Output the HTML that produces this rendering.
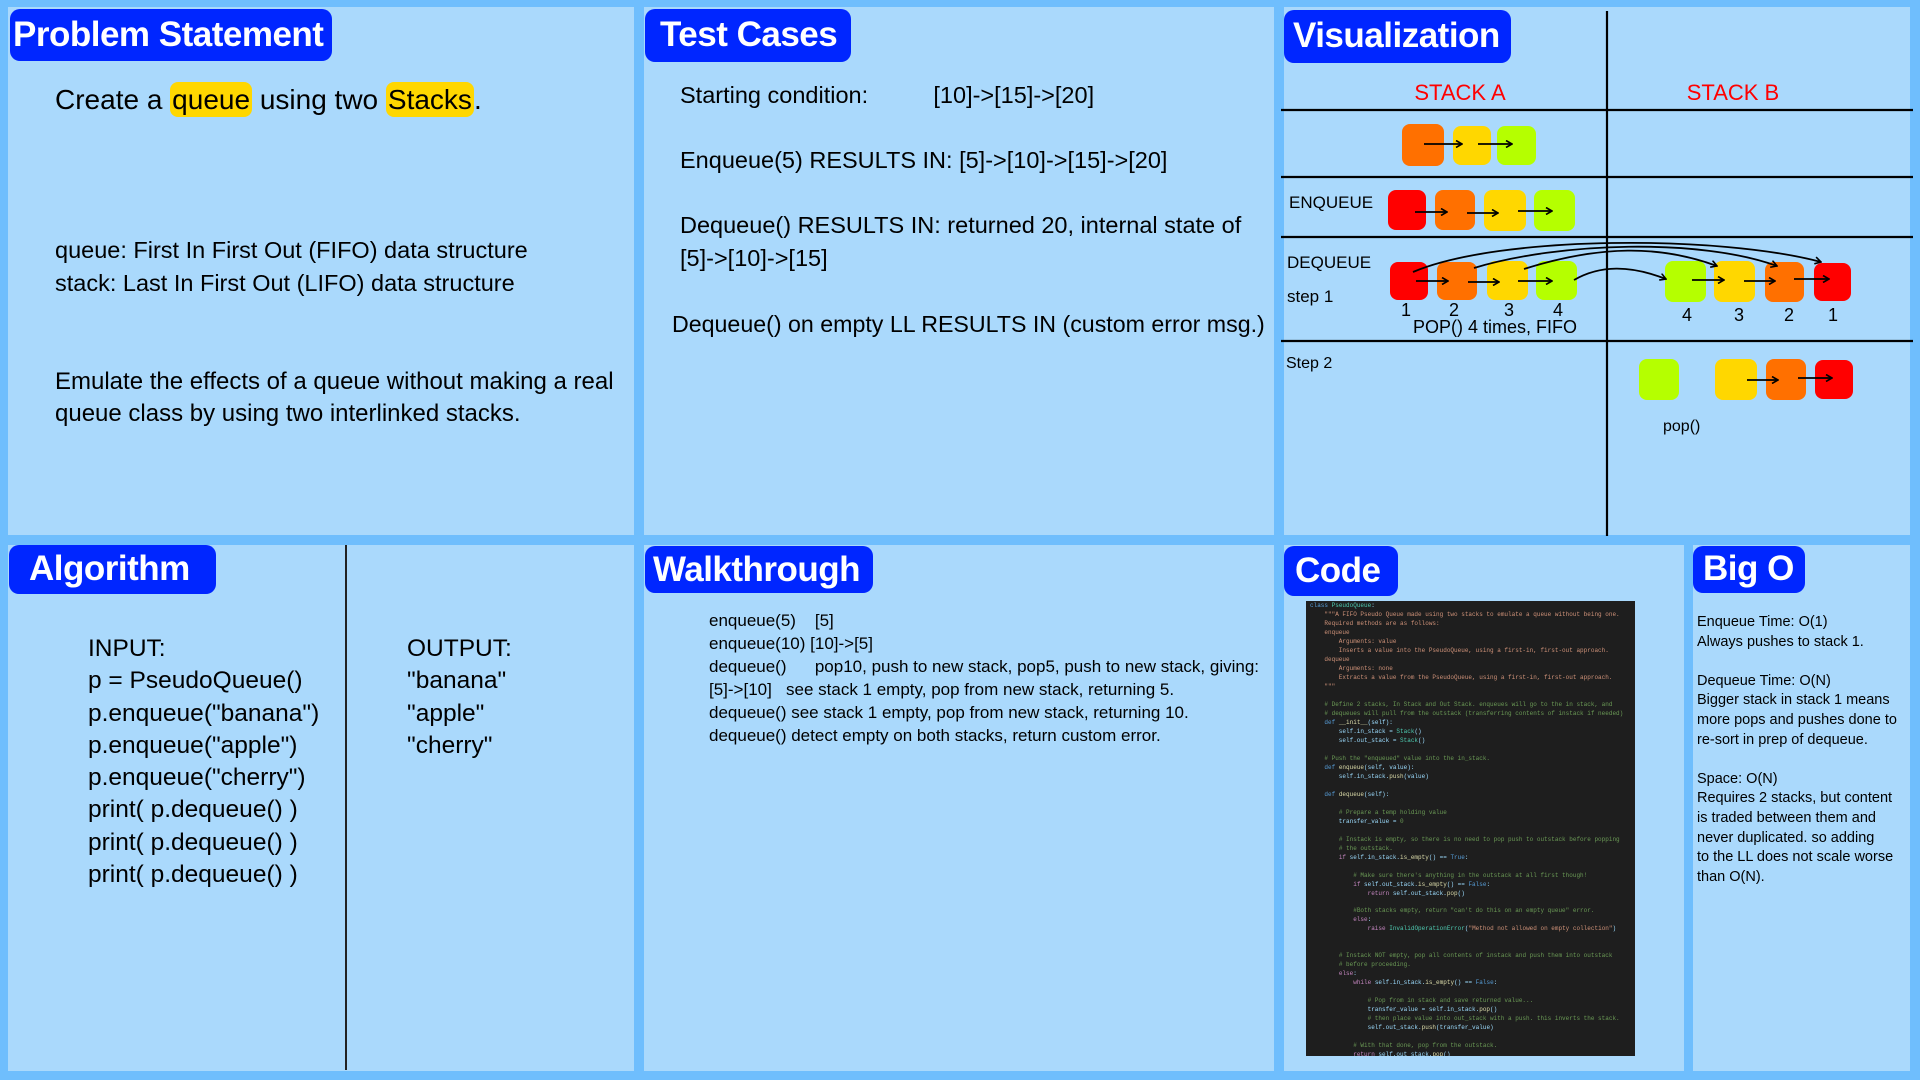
<!DOCTYPE html>
<html><head><meta charset="utf-8">
<style>
*{margin:0;padding:0;box-sizing:border-box}
html,body{width:1920px;height:1080px;overflow:hidden;background:#6fbefd;font-family:"Liberation Sans",sans-serif;color:#000}
.p{position:absolute;background:#aad9fc}
.b{position:absolute;background:#0026ff;color:#fff;font-weight:bold;border-radius:10px;font-size:35px;line-height:1;padding-top:8px;letter-spacing:-0.5px}
.t{position:absolute;white-space:nowrap;line-height:1}
.hl{background:#ffd700;border-radius:8px;padding:2px 2px}
pre{position:absolute;left:1306px;top:601px;width:329px;height:455px;background:#1e1e1e;font-family:"Liberation Mono",monospace;font-size:6px;line-height:8.98px;color:#9cdcfe;padding:1px 0 0 4px;overflow:hidden}
.s{color:#ce9178}.c{color:#6a9955}.k{color:#569cd6}.f{color:#dcdcaa}.g{color:#4ec9b0}.m{color:#c586c0}
</style></head><body>
<div class="p" style="left:8px;top:7px;width:626px;height:528px"></div>
<div class="p" style="left:644px;top:7px;width:630px;height:528px"></div>
<div class="p" style="left:1284px;top:7px;width:626px;height:528px"></div>
<div class="p" style="left:8px;top:545px;width:626px;height:526px"></div>
<div class="p" style="left:644px;top:545px;width:630px;height:526px"></div>
<div class="p" style="left:1284px;top:545px;width:400px;height:526px"></div>
<div class="p" style="left:1693px;top:545px;width:217px;height:526px"></div>

<div class="b" style="left:10px;top:9px;width:322px;height:52px;padding-left:3px">Problem Statement</div>
<div class="b" style="left:645px;top:9px;width:206px;height:53px;padding-left:15px">Test Cases</div>
<div class="b" style="left:1284px;top:10px;width:227px;height:53px;padding-left:9px">Visualization</div>
<div class="b" style="left:9px;top:545px;width:207px;height:49px;padding-left:20px;padding-top:6px">Algorithm</div>
<div class="b" style="left:645px;top:546px;width:228px;height:47px;padding-left:8px;padding-top:6px">Walkthrough</div>
<div class="b" style="left:1284px;top:546px;width:114px;height:50px;padding-left:11px;padding-top:7px">Code</div>
<div class="b" style="left:1693px;top:546px;width:112px;height:47px;padding-left:10px;padding-top:5px">Big O</div>

<!-- problem statement -->
<div class="t" style="left:55px;top:86px;font-size:28px">Create a <span class="hl">queue</span> using two <span class="hl">Stacks</span>.</div>
<div class="t" style="left:55px;top:239px;font-size:23.5px">queue: First In First Out (FIFO) data structure</div>
<div class="t" style="left:55px;top:272px;font-size:23.5px">stack: Last In First Out (LIFO) data structure</div>
<div class="t" style="left:55px;top:370px;font-size:24px">Emulate the effects of a queue without making a real</div>
<div class="t" style="left:55px;top:402px;font-size:24px">queue class by using two interlinked stacks.</div>

<!-- test cases -->
<div class="t" style="left:680px;top:84px;font-size:23.5px">Starting condition:&nbsp;&nbsp;&nbsp;&nbsp;&nbsp;&nbsp;&nbsp;&nbsp;&nbsp;&nbsp;[10]-&gt;[15]-&gt;[20]</div>
<div class="t" style="left:680px;top:149px;font-size:23.5px">Enqueue(5) RESULTS IN: [5]-&gt;[10]-&gt;[15]-&gt;[20]</div>
<div class="t" style="left:680px;top:214px;font-size:23.5px">Dequeue() RESULTS IN: returned 20, internal state of</div>
<div class="t" style="left:680px;top:247px;font-size:23.5px">[5]-&gt;[10]-&gt;[15]</div>
<div class="t" style="left:672px;top:313px;font-size:23.2px">Dequeue() on empty LL RESULTS IN (custom error msg.)</div>

<!-- visualization -->
<svg style="position:absolute;left:0;top:0" width="1920" height="1080">
<defs><marker id="a" markerWidth="8" markerHeight="8" refX="7" refY="4" orient="auto" markerUnits="userSpaceOnUse"><path d="M1,0.5 L7,4 L1,7.5" fill="none" stroke="#000" stroke-width="1.6"/></marker></defs>
<g stroke="#000" stroke-width="2.2">
<line x1="1607" y1="11" x2="1607" y2="536"/>
<line x1="1281" y1="110" x2="1913" y2="110"/>
<line x1="1281" y1="177" x2="1913" y2="177"/>
<line x1="1281" y1="237" x2="1913" y2="237"/>
<line x1="1281" y1="341" x2="1913" y2="341"/>
</g>
<g font-family="Liberation Sans,sans-serif" font-size="22" fill="#f00" text-anchor="middle"><text x="1460" y="100">STACK A</text><text x="1733" y="100">STACK B</text></g>
<g>
<rect x="1402" y="124" width="42" height="42" rx="8" fill="#ff7000"/><rect x="1453" y="126" width="38" height="39" rx="8" fill="#ffd700"/><rect x="1497" y="126" width="39" height="39" rx="8" fill="#b5ff00"/>
<rect x="1388" y="190" width="38" height="40" rx="8" fill="#f00"/><rect x="1435" y="190" width="40" height="40" rx="8" fill="#ff7000"/><rect x="1484" y="190" width="42" height="41" rx="8" fill="#ffd700"/><rect x="1534" y="190" width="41" height="41" rx="8" fill="#b5ff00"/>
<rect x="1390" y="262" width="38" height="38" rx="8" fill="#f00"/><rect x="1437" y="262" width="40" height="38" rx="8" fill="#ff7000"/><rect x="1487" y="261" width="41" height="39" rx="8" fill="#ffd700"/><rect x="1536" y="261" width="41" height="39" rx="8" fill="#b5ff00"/>
<rect x="1665" y="261" width="41" height="41" rx="8" fill="#b5ff00"/><rect x="1714" y="261" width="41" height="41" rx="8" fill="#ffd700"/><rect x="1765" y="262" width="39" height="40" rx="8" fill="#ff7000"/><rect x="1814" y="263" width="37" height="38" rx="8" fill="#f00"/>
<rect x="1639" y="359" width="40" height="41" rx="8" fill="#b5ff00"/><rect x="1715" y="359" width="42" height="41" rx="8" fill="#ffd700"/><rect x="1766" y="359" width="40" height="41" rx="8" fill="#ff7000"/><rect x="1815" y="360" width="38" height="39" rx="8" fill="#f00"/>
</g>
<g stroke="#000" stroke-width="1.8" fill="none" marker-end="url(#a)">
<line x1="1424" y1="144" x2="1462" y2="144"/><line x1="1478" y1="144" x2="1512" y2="144"/>
<line x1="1415" y1="212" x2="1447" y2="212"/><line x1="1467" y1="213" x2="1498" y2="213"/><line x1="1518" y1="211" x2="1552" y2="211"/>
<line x1="1416" y1="281" x2="1448" y2="281"/><line x1="1468" y1="282" x2="1499" y2="282"/><line x1="1518" y1="281" x2="1552" y2="281"/>
<line x1="1692" y1="280" x2="1724" y2="280"/><line x1="1744" y1="281" x2="1775" y2="281"/><line x1="1794" y1="279" x2="1829" y2="279"/>
<line x1="1747" y1="380" x2="1778" y2="380"/><line x1="1798" y1="378" x2="1832" y2="378"/>
<path d="M1413,272 C1500,235 1720,235 1821,262"/>
<path d="M1474,268 C1560,242 1700,238 1777,266"/>
<path d="M1524,269 C1600,245 1660,245 1717,266"/>
<path d="M1574,280 C1600,265 1630,265 1666,279"/>
</g>
<g font-family="Liberation Sans,sans-serif" font-size="17" fill="#000">
<text x="1289" y="208">ENQUEUE</text><text x="1287" y="268">DEQUEUE</text><text x="1287" y="302">step 1</text>
<text x="1401" y="316" font-size="18">1</text><text x="1449" y="316" font-size="18">2</text><text x="1504" y="316" font-size="18">3</text><text x="1553" y="316" font-size="18">4</text>
<text x="1413" y="333" font-size="18">POP() 4 times, FIFO</text>
<text x="1682" y="321" font-size="18">4</text><text x="1734" y="321" font-size="18">3</text><text x="1784" y="321" font-size="18">2</text><text x="1828" y="321" font-size="18">1</text>
<text x="1286" y="368" font-size="16">Step 2</text><text x="1663" y="431" font-size="16">pop()</text>
</g>
</svg>

<!-- algorithm -->
<div style="position:absolute;left:345px;top:545px;width:2px;height:525px;background:#222"></div>
<div style="position:absolute;left:88px;top:633px;font-size:24.5px;line-height:32.3px;white-space:nowrap">INPUT:<br>p = PseudoQueue()<br>p.enqueue("banana")<br>p.enqueue("apple")<br>p.enqueue("cherry")<br>print( p.dequeue() )<br>print( p.dequeue() )<br>print( p.dequeue() )</div>
<div style="position:absolute;left:407px;top:633px;font-size:24.5px;line-height:32.3px">OUTPUT:<br>"banana"<br>"apple"<br>"cherry"</div>

<!-- walkthrough -->
<div style="position:absolute;left:709px;top:609px;font-size:17px;line-height:23px;white-space:nowrap">enqueue(5)&nbsp;&nbsp;&nbsp;&nbsp;[5]<br>enqueue(10) [10]-&gt;[5]<br>dequeue()&nbsp;&nbsp;&nbsp;&nbsp;&nbsp;&nbsp;pop10, push to new stack, pop5, push to new stack, giving:<br>[5]-&gt;[10]&nbsp;&nbsp;&nbsp;see stack 1 empty, pop from new stack, returning 5.<br>dequeue() see stack 1 empty, pop from new stack, returning 10.<br>dequeue() detect empty on both stacks, return custom error.</div>

<!-- code -->
<pre><span class="k">class</span> <span class="g">PseudoQueue</span>:
    <span class="s">"""A FIFO Pseudo Queue made using two stacks to emulate a queue without being one.</span>
<span class="s">    Required methods are as follows:</span>
<span class="s">    enqueue</span>
<span class="s">        Arguments: value</span>
<span class="s">        Inserts a value into the PseudoQueue, using a first-in, first-out approach.</span>
<span class="s">    dequeue</span>
<span class="s">        Arguments: none</span>
<span class="s">        Extracts a value from the PseudoQueue, using a first-in, first-out approach.</span>
<span class="s">    """</span>

    <span class="c"># Define 2 stacks, In Stack and Out Stack. enqueues will go to the in stack, and</span>
    <span class="c"># dequeues will pull from the outstack (transferring contents of instack if needed)</span>
    <span class="k">def</span> <span class="f">__init__</span>(self):
        self.in_stack = <span class="g">Stack</span>()
        self.out_stack = <span class="g">Stack</span>()

    <span class="c"># Push the "enqueued" value into the in_stack.</span>
    <span class="k">def</span> <span class="f">enqueue</span>(self, value):
        self.in_stack.<span class="f">push</span>(value)

    <span class="k">def</span> <span class="f">dequeue</span>(self):

        <span class="c"># Prepare a temp holding value</span>
        transfer_value = <span class="c">0</span>

        <span class="c"># Instack is empty, so there is no need to pop push to outstack before popping</span>
        <span class="c"># the outstack.</span>
        <span class="m">if</span> self.in_stack.<span class="f">is_empty</span>() == <span class="k">True</span>:

            <span class="c"># Make sure there's anything in the outstack at all first though!</span>
            <span class="m">if</span> self.out_stack.<span class="f">is_empty</span>() == <span class="k">False</span>:
                <span class="m">return</span> self.out_stack.<span class="f">pop</span>()

            <span class="c">#Both stacks empty, return "can't do this on an empty queue" error.</span>
            <span class="m">else</span>:
                <span class="m">raise</span> <span class="g">InvalidOperationError</span>(<span class="s">"Method not allowed on empty collection"</span>)


        <span class="c"># Instack NOT empty, pop all contents of instack and push them into outstack</span>
        <span class="c"># before proceeding.</span>
        <span class="m">else</span>:
            <span class="m">while</span> self.in_stack.<span class="f">is_empty</span>() == <span class="k">False</span>:

                <span class="c"># Pop from in stack and save returned value...</span>
                transfer_value = self.in_stack.<span class="f">pop</span>()
                <span class="c"># then place value into out_stack with a push. this inverts the stack.</span>
                self.out_stack.<span class="f">push</span>(transfer_value)

            <span class="c"># With that done, pop from the outstack.</span>
            <span class="m">return</span> self.out_stack.<span class="f">pop</span>()</pre>

<!-- big O -->
<div style="position:absolute;left:1697px;top:613px;font-size:14.5px;line-height:19.6px;white-space:nowrap">Enqueue Time: O(1)<br>Always pushes to stack 1.<br><br>Dequeue Time: O(N)<br>Bigger stack in stack 1 means<br>more pops and pushes done to<br>re-sort in prep of dequeue.<br><br>Space: O(N)<br>Requires 2 stacks, but content<br>is traded between them and<br>never duplicated. so adding<br>to the LL does not scale worse<br>than O(N).</div>
</body></html>
